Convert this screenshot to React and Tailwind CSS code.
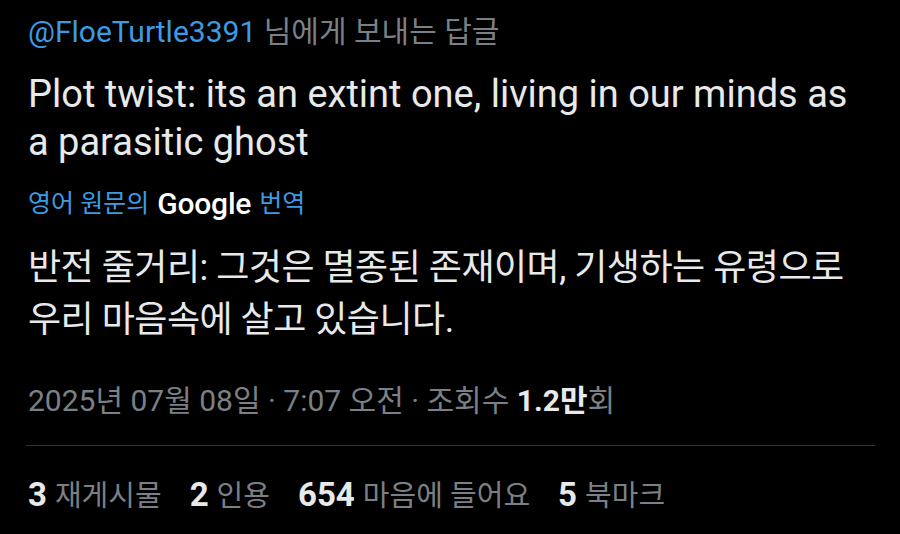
export default function App() {
  const font = { fontFamily: 'Roboto, "Noto Sans CJK KR", sans-serif' };
  const stats = [
    { n: "3", label: "재게시물" },
    { n: "2", label: "인용" },
    { n: "654", label: "마음에 들어요" },
    { n: "5", label: "북마크" },
  ];

  return (
    <div
      className="w-[900px] h-[534px] bg-black overflow-hidden text-[#e7e9ea]"
      style={font}
    >
      <div className="pl-[28px] pr-[26px] pt-[14px]">
        {/* Reply line */}
        <p className="text-[30px] leading-[36px] text-[#7b8086] whitespace-nowrap">
          <span className="text-[#3d9be4]">@FloeTurtle3391</span> 님에게 보내는 답글
        </p>

        {/* Original text */}
        <p className="mt-[20px] text-[38px] leading-[48px] text-[#e7e9ea]">
          Plot twist: its an extint one, living in our minds as a parasitic ghost
        </p>

        {/* Translate link */}
        <p className="mt-[22px] h-[32px] text-[25px] leading-[32px] text-[#3d9be4] flex items-center gap-[8px]">
          <span>영어 원문의</span>
          <span className="text-white text-[30px] font-medium tracking-[-0.2px]">Google</span>
          <span>번역</span>
        </p>

        {/* Translated text */}
        <p className="mt-[22px] text-[36px] leading-[52px] text-[#e7e9ea] tracking-[-0.5px]">
          반전 줄거리: 그것은 멸종된 존재이며, 기생하는 유령으로 우리 마음속에 살고 있습니다.
        </p>

        {/* Meta */}
        <p className="mt-[37px] text-[30px] leading-[36px] text-[#7b8086] whitespace-nowrap">
          2025년 07월 08일 · 7:07 오전 · 조회수{" "}
          <span className="font-bold text-[#e7e9ea]">1.2만</span>회
        </p>
      </div>

      <div className="ml-[26px] mr-[25px] mt-[26px] border-t border-[#2f3336]" />

      <div className="px-[28px] pt-[31px] flex items-center gap-[28px] text-[29px] leading-[36px] whitespace-nowrap">
        {stats.map((s) => (
          <span key={s.label} className="flex items-baseline gap-[8px]">
            <span className="font-bold text-[33px] text-[#e7e9ea]">{s.n}</span>
            <span className="text-[#7b8086]">{s.label}</span>
          </span>
        ))}
      </div>
    </div>
  );
}
